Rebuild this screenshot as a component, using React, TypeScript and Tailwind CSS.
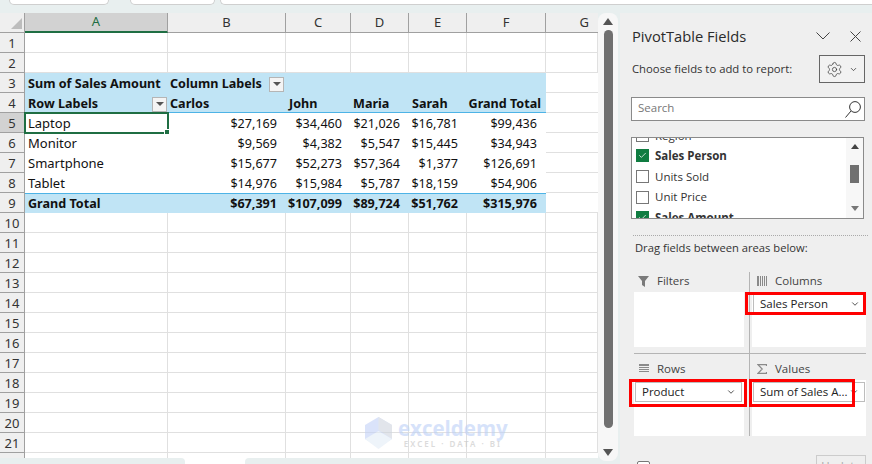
import { ChevronDown, Settings, Check } from 'lucide-react'

const gridFont = "font-['Noto_Sans',sans-serif]"
const panelFont = "font-['Open_Sans',sans-serif]"

const colWidths = 'grid-cols-[25px_143px_118px_65px_58px_58px_79px_52px]'
const columns = ['A', 'B', 'C', 'D', 'E', 'F', 'G']

const sales = [
  { row: 5, name: 'Laptop', values: ['$27,169', '$34,460', '$21,026', '$16,781', '$99,436'] },
  { row: 6, name: 'Monitor', values: ['$9,569', '$4,382', '$5,547', '$15,445', '$34,943'] },
  { row: 7, name: 'Smartphone', values: ['$15,677', '$52,273', '$57,364', '$1,377', '$126,691'] },
  { row: 8, name: 'Tablet', values: ['$14,976', '$15,984', '$5,787', '$18,159', '$54,906'] },
]
const totals = ['$67,391', '$107,099', '$89,724', '$51,762', '$315,976']
const headers = ['Carlos', 'John', 'Maria', 'Sarah']

function FilterButton() {
  return (
    <span className="ml-auto flex h-[15px] w-[15px] items-center justify-center border border-[#b5b5b5] bg-[#f4f4f4]">
      <span className="h-0 w-0 border-x-[4px] border-t-[4px] border-x-transparent border-t-[#555]" />
    </span>
  )
}

function RowHead({ n, active }: { n: number; active?: boolean }) {
  return (
    <div
      className={`flex h-5 items-center justify-center border-r border-b border-[#a0a0a0] pt-[2px] text-[13px] text-[#333] ${
        active ? 'bg-[#d2d2d2] text-[#1f6e43]' : 'bg-[#efefef]'
      }`}
    >
      {n}
    </div>
  )
}

function Blank({ n }: { n: number }) {
  return (
    <>
      <RowHead n={n} />
      {columns.map((c) => (
        <div key={c} className="h-5 border-r border-b border-[#e0e0e0] bg-white last:border-r-0" />
      ))}
    </>
  )
}

function Sheet() {
  const blue = 'h-5 bg-[#c0e4f5] flex items-center text-[12.6px] font-bold text-[#111] whitespace-nowrap'
  const head = `${blue} border-b border-[#4db3e6] pt-[3px]`
  return (
    <div className={`relative min-h-0 flex-1 overflow-hidden bg-white ${gridFont}`}>
      <div className={`grid ${colWidths} auto-rows-[20px]`}>
        <div className="relative h-5 border-r border-b border-[#a0a0a0] bg-[#efefef]">
          <span className="absolute right-[2px] bottom-[3px] h-0 w-0 border-b-[11px] border-l-[11px] border-b-[#bdbdbd] border-l-transparent" />
        </div>
        {columns.map((c) => (
          <div
            key={c}
            className={`flex h-5 items-center justify-center text-[13px] ${
              c === 'A'
                ? 'border-r border-b-2 border-r-[#a0a0a0] border-b-[#1f6e43] bg-[#d2d2d2] text-[#1f6e43]'
                : c === 'G'
                  ? 'justify-end border-b border-[#a0a0a0] bg-[#efefef] pr-[9px] text-[#333]'
                  : 'border-r border-b border-[#a0a0a0] bg-[#efefef] text-[#333]'
            }`}
          >
            {c}
          </div>
        ))}

        <Blank n={1} />
        <Blank n={2} />

        <RowHead n={3} />
        <div className={`${blue} pt-[2px] pl-[3px]`}>Sum of Sales Amount</div>
        <div className={`${blue} pt-[2px] pr-[2px] pl-[2px]`}>
          Column Labels
          <FilterButton />
        </div>
        <div className={blue} />
        <div className={blue} />
        <div className={blue} />
        <div className={blue} />
        <div className="border-b border-[#e0e0e0]" />

        <RowHead n={4} />
        <div className={`${head} pr-px pl-[3px]`}>
          Row Labels
          <FilterButton />
        </div>
        <div className={`${head} pl-[2px]`}>{headers[0]}</div>
        <div className={`${head} pl-[3px]`}>{headers[1]}</div>
        <div className={`${head} pl-[2px]`}>{headers[2]}</div>
        <div className={`${head} pl-[3px]`}>{headers[3]}</div>
        <div className={`${head} justify-end pr-[5px]`}>Grand Total</div>
        <div className="border-b border-[#e0e0e0]" />

        {sales.map((s) => (
          <div key={s.row} className="contents">
            <RowHead n={s.row} active={s.row === 5} />
            <div
              className={`relative flex h-5 items-center pt-[2px] pl-[3px] text-[13px] text-[#111] ${
                s.row === 5 ? 'outline-2 -outline-offset-1 outline-[#1f6e43]' : ''
              }`}
            >
              {s.name}
              {s.row === 5 && (
                <span className="absolute -right-[2px] -bottom-[2px] h-[6px] w-[6px] border border-white bg-[#1f6e43]" />
              )}
            </div>
            {s.values.map((v, i) => (
              <div key={i} className="flex h-5 items-center justify-end pt-[2px] pr-[9px] text-[12.6px] text-[#111]">
                {v}
              </div>
            ))}
            <div className="border-b border-[#e0e0e0]" />
          </div>
        ))}

        <RowHead n={9} />
        <div className={`${blue} border-t border-[#4db3e6] pt-[2px] pl-[3px]`}>Grand Total</div>
        {totals.map((v, i) => (
          <div key={i} className={`${blue} justify-end border-t border-[#4db3e6] pt-[2px] pr-[9px]`}>
            {v}
          </div>
        ))}
        <div className="border-b border-[#e0e0e0]" />

        {Array.from({ length: 13 }, (_, i) => (
          <Blank key={i} n={i + 10} />
        ))}
      </div>
      <Watermark />
    </div>
  )
}

function Watermark() {
  return (
    <div className="pointer-events-none absolute top-[404px] left-[365px] flex items-center gap-[6px] opacity-60">
      <svg width="27" height="32" viewBox="0 0 27 32">
        <path d="M13.5 0 L27 8 V22 L13.5 30 L0 22 V8 Z" fill="#c3d2f7" />
        <path d="M13.5 0 L27 8 V22 L13.5 13 Z" fill="#cfd5de" />
        <path d="M0 22 L13.5 14 L27 22 L13.5 32 Z" fill="#e3edf7" />
      </svg>
      <div className="flex flex-col items-center">
        <span className="font-['Open_Sans',sans-serif] text-[20.5px] leading-[20px] font-bold text-[#bcd0f7]">exceldemy</span>
        <span className="text-[8px] leading-[11px] font-semibold tracking-[2px] text-[#c4c4c4]">EXCEL · DATA · BI</span>
      </div>
    </div>
  )
}

function VerticalScroll() {
  return (
    <div className="flex h-[448px] w-[20px] shrink-0 flex-col items-center rounded-lg bg-[#f7f7f7] pt-[5px]">
      <span className="h-0 w-0 border-x-[5px] border-b-[7px] border-x-transparent border-b-[#555]" />
      <div className="mt-[5px] h-[398px] w-[9px] rounded-full bg-[#707070]" />
      <span className="mt-[21px] h-0 w-0 border-x-[5px] border-t-[7px] border-x-transparent border-t-[#555]" />
    </div>
  )
}

function FieldRow({ label, bold, checked }: { label: string; bold?: boolean; checked?: boolean }) {
  return (
    <div className="flex h-[20.6px] shrink-0 items-center gap-[6px] pl-[4px] text-[11.5px] text-[#333]">
      {checked ? (
        <span className="flex h-[13px] w-[13px] items-center justify-center bg-[#107c41]">
          <Check size={9} color="white" strokeWidth={2} />
        </span>
      ) : (
        <span className="h-[13px] w-[13px] border border-[#777] bg-white" />
      )}
      <span className={bold ? 'font-bold' : ''}>{label}</span>
    </div>
  )
}

function Pill({ label }: { label: string }) {
  return (
    <div className="flex h-[20px] items-center justify-between border border-[#bdbdbd] bg-white pr-[5px] pl-[6px] text-[11.5px] text-[#222]">
      <span className="whitespace-nowrap">{label}</span>
      <ChevronDown size={10} color="#333" strokeWidth={2} />
    </div>
  )
}

function AreaTitle({ icon, label }: { icon: React.ReactNode; label: string }) {
  return (
    <div className="flex h-[20px] items-center gap-[8px] pb-[2px] pl-[4px] text-[11.5px] text-[#444]">
      <span className="flex w-[11px] justify-center">{icon}</span>
      {label}
    </div>
  )
}

function Panel() {
  return (
    <aside className={`relative flex w-[252px] shrink-0 flex-col overflow-hidden bg-[#efefef] pr-[7px] pl-[11px] text-[#333] ${panelFont}`}>
      <div className="mt-[13px] flex h-[20px] shrink-0 items-center pr-[4px] pl-px text-[14.7px] text-[#2b2b2b]">
        PivotTable Fields
        <svg width="14" height="8" viewBox="0 0 14 8" className="mr-[20px] ml-auto" fill="none" stroke="#444" strokeWidth="1">
          <path d="M0.5 0.5 L7 7 L13.5 0.5" />
        </svg>
        <svg width="11" height="11" viewBox="0 0 11 11" fill="none" stroke="#444" strokeWidth="1">
          <path d="M0.5 0.5 L10.5 10.5 M10.5 0.5 L0.5 10.5" />
        </svg>
      </div>
      <div className="mt-[9px] flex h-[28px] shrink-0 items-center pl-px text-[11.3px] text-[#333]">
        Choose fields to add to report:
        <div className="ml-auto flex h-[28px] w-[46px] items-center justify-center gap-[6px] border border-[#666] bg-[#f2f2f2]">
          <Settings size={17} strokeWidth={1} color="#333" />
          <ChevronDown size={9} strokeWidth={2} color="#333" />
        </div>
      </div>
      <div className="mt-[14px] flex h-[24px] shrink-0 items-center justify-between border border-[#8a8a8a] bg-white pr-[3px] pl-[6px] text-[11.5px] text-[#777]">
        <span className="-mt-[3px]">Search</span>
        <svg width="16" height="17" viewBox="0 0 16 17" fill="none" stroke="#333" strokeWidth="1">
          <circle cx="10" cy="6" r="5.4" />
          <path d="M6 10 L0.5 16.5" />
        </svg>
      </div>
      <div className="mt-[16px] mr-px flex h-[82px] shrink-0 overflow-hidden border border-[#8a8a8a] bg-white">
        <div className="-mt-[13px] flex min-w-0 flex-1 flex-col">
          <FieldRow label="Region" />
          <FieldRow label="Sales Person" bold checked />
          <FieldRow label="Units Sold" />
          <FieldRow label="Unit Price" />
          <FieldRow label="Sales Amount" bold checked />
        </div>
        <div className="flex w-[17px] shrink-0 flex-col items-center bg-[#f7f7f7] pt-[6px]">
          <span className="h-0 w-0 border-x-[4px] border-b-[5px] border-x-transparent border-b-[#444]" />
          <div className="mt-[16px] h-[18px] w-[9px] bg-[#707070]" />
          <span className="mt-[23px] h-0 w-0 border-x-[4px] border-t-[5px] border-x-transparent border-t-[#777]" />
        </div>
      </div>
      <div className="mt-[16px] -mr-[3px] ml-[2px] shrink-0 border-t border-dotted border-[#aaa]" />
      <div className="mt-[3px] flex h-[18px] shrink-0 items-center pl-[4px] text-[11.2px] text-[#333]">
        Drag fields between areas below:
      </div>

      <div className="mt-[15px] -mr-px ml-[3px] grid shrink-0 grid-cols-[116px_1fr]">
        <div className="border-r border-b border-[#b4b4b4] pr-[5px] pb-[6px]">
          <AreaTitle
            label="Filters"
            icon={
              <svg width="11" height="11" viewBox="0 0 11 11">
                <path d="M0 0H11L7 5V11L4 9V5Z" fill="#7a7a7a" />
              </svg>
            }
          />
          <div className="h-[55px] bg-white" />
        </div>
        <div className="border-b border-[#b4b4b4] pb-[6px] pl-[2px]">
          <AreaTitle
            label="Columns"
            icon={
              <svg width="10" height="10" viewBox="0 0 10 10">
                <path d="M0 0H2V10H0ZM3 0H4V10H3ZM5 0H6V10H5ZM7 0H8V10H7ZM9 0H10V10H9Z" fill="#8a8a8a" />
              </svg>
            }
          />
          <div className="h-[55px] bg-white pt-[2px] pl-px">
            <Pill label="Sales Person" />
          </div>
        </div>
        <div className="border-r border-[#b4b4b4] pt-[6px] pr-[5px]">
          <AreaTitle
            label="Rows"
            icon={
              <svg width="10" height="10" viewBox="0 0 10 10">
                <path d="M0 0H10V2H0ZM0 3H10V4H0ZM0 5H10V6H0ZM0 7H10V8H0Z" fill="#8a8a8a" />
              </svg>
            }
          />
          <div className="h-[56px] bg-white pt-[2px] pr-[2px] pl-px">
            <Pill label="Product" />
          </div>
        </div>
        <div className="pt-[6px] pl-[2px]">
          <AreaTitle
            label="Values"
            icon={
              <svg width="10" height="10" viewBox="0 0 10 10" fill="none" stroke="#8a8a8a" strokeWidth="1.2">
                <path d="M9.5 2 V0.6 H1 L5.2 5 L1 9.4 H9.5 V8" />
              </svg>
            }
          />
          <div className="h-[56px] bg-white pt-[2px] pr-px pl-px">
            <Pill label="Sum of Sales A..." />
          </div>
        </div>
      </div>

      <div className="mt-[19px] flex shrink-0 items-start pl-[6px]">
        <span className="mt-[6px] h-[13px] w-[13px] rounded-[2px] border border-[#777] bg-white" />
        <span className="mt-[4px] ml-[8px] text-[11.5px] text-[#222]">Defer Layout Update</span>
        <span className="mr-[-1px] ml-auto flex h-[22px] w-[50px] items-center justify-center border border-[#ccc] bg-[#efefef] text-[11.5px] text-[#aaa]">
          Update
        </span>
      </div>

      <div className="pointer-events-none absolute top-[279px] left-[125px] h-[23px] w-[121px] border-[3px] border-[#ff0000]" />
      <div className="pointer-events-none absolute top-[366px] left-[9px] h-[28px] w-[118px] border-[3px] border-[#ff0000]" />
      <div className="pointer-events-none absolute top-[366px] left-[129px] h-[28px] w-[106px] border-[3px] border-[#ff0000]" />
    </aside>
  )
}

export default function App() {
  return (
    <div className="flex h-[464px] w-[872px] flex-col overflow-hidden bg-[#e8efef]">
      <div className="flex h-[13px] shrink-0 items-start pl-[9px]">
        <div className="h-[5px] w-[100px] rounded-b-md border-x border-b border-[#cfcfcf] bg-white" />
        <div className="ml-[21px] h-[5px] w-[85px] rounded-b-md border-x border-b border-[#cfcfcf] bg-white" />
        <div className="ml-[5px] h-[5px] flex-1 rounded-bl-md border-b border-l border-[#cfcfcf] bg-white" />
      </div>
      <div className="flex min-h-0 flex-1">
        <div className="flex w-[620px] shrink-0 pr-[2px]">
          <div className="flex w-[598px] shrink-0 flex-col">
            <Sheet />
            <div className="flex h-[6px] shrink-0 bg-white">
              <div className="h-full w-[185px] rounded-tr bg-[#e8efef]" />
              <div className="ml-[60px] h-full flex-1 rounded-tl bg-[#e8efef]" />
            </div>
          </div>
          <VerticalScroll />
        </div>
        <Panel />
      </div>
    </div>
  )
}
